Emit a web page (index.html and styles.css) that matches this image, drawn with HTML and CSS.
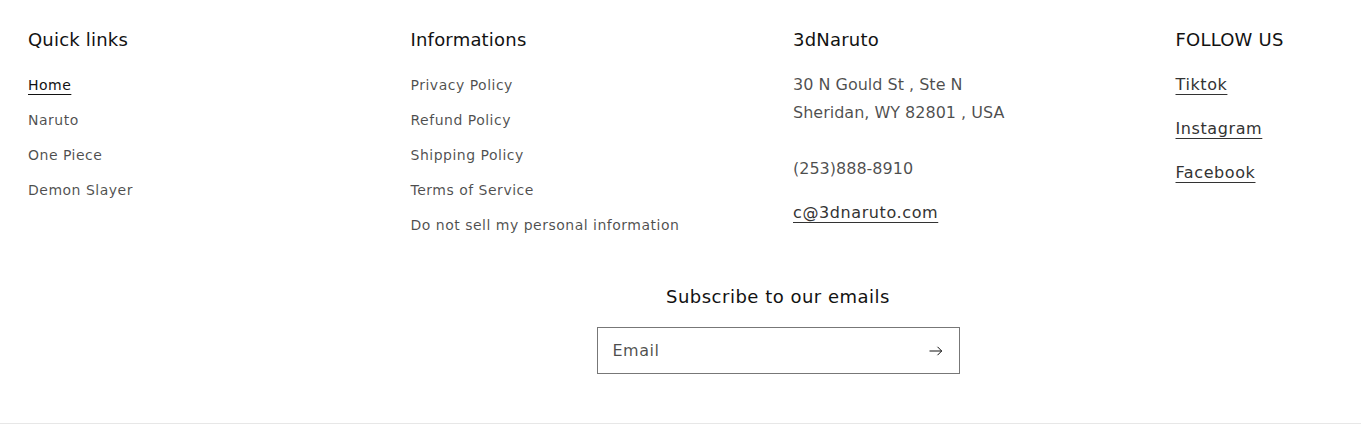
FILE: index.html
```html
<!DOCTYPE html>
<html lang="en">
<head>
<meta charset="utf-8">
<title>Footer</title>
<link rel="stylesheet" href="styles.css">
</head>
<body>
<footer class="footer">
  <div class="page">
    <div class="cols">
      <div class="col">
        <h2 class="heading">Quick links</h2>
        <ul class="links">
          <li><a class="link link-active" href="#">Home</a></li>
          <li><a class="link" href="#">Naruto</a></li>
          <li><a class="link" href="#">One Piece</a></li>
          <li><a class="link" href="#">Demon Slayer</a></li>
        </ul>
      </div>
      <div class="col">
        <h2 class="heading">Informations</h2>
        <ul class="links">
          <li><a class="link" href="#">Privacy Policy</a></li>
          <li><a class="link" href="#">Refund Policy</a></li>
          <li><a class="link" href="#">Shipping Policy</a></li>
          <li><a class="link" href="#">Terms of Service</a></li>
          <li><a class="link" href="#">Do not sell my personal information</a></li>
        </ul>
      </div>
      <div class="col">
        <h2 class="heading">3dNaruto</h2>
        <div class="rich">
          <p class="para address">30 N Gould St , Ste N<br>Sheridan, WY 82801 , USA<br><br>(253)888-8910</p>
          <p class="para"><a class="ulink" href="#">c@3dnaruto.com</a></p>
        </div>
      </div>
      <div class="col">
        <h2 class="heading">FOLLOW US</h2>
        <div class="rich">
          <p class="para"><a class="ulink" href="#">Tiktok</a></p>
          <p class="para"><a class="ulink" href="#">Instagram</a></p>
          <p class="para"><a class="ulink" href="#">Facebook</a></p>
        </div>
      </div>
    </div>
    <div class="subscribe">
      <h2 class="heading sub-heading">Subscribe to our emails</h2>
      <form class="field">
        <input class="input" type="email" placeholder="Email">
        <button class="submit" type="button" aria-label="Subscribe">
          <svg width="14" height="10" viewBox="0 0 14 10" fill="none"><path d="M8.5 0.8 L12.7 5 L8.5 9.2 M0.5 5 H12.7" stroke="#121212" stroke-width="1"/></svg>
        </button>
      </form>
    </div>
  </div>
</footer>
</body>
</html>
```

FILE: styles.css
```css
html, body {
  margin: 0;
  padding: 0;
  background: #ffffff;
}
body {
  font-family: "DejaVu Sans", "Noto Sans", sans-serif;
  color: #121212;
}
.footer {
  border-bottom: 1px solid #e7e7e7;
  padding: 28px 0 49px;
}
.page {
  margin: 0 28px;
}
.cols {
  display: grid;
  grid-template-columns: repeat(3, 352.5px) 1fr;
  column-gap: 30px;
}
.heading {
  margin: 0 0 16px;
  font-size: 18px;
  line-height: 24px;
  font-weight: 400;
  letter-spacing: 0.2px;
  color: #121212;
}
.links {
  list-style: none;
  margin: 0;
  padding: 0;
}
.links li {
  line-height: 35px;
  font-size: 14px;
}
.link {
  color: rgba(18,18,18,0.75);
  text-decoration: none;
  letter-spacing: 0.5px;
}
.link-active {
  color: #121212;
  text-decoration: underline;
  text-underline-offset: 4px;
  text-decoration-thickness: 1px;
}
.rich {
  padding-top: 3px;
}
.para {
  margin: 0 0 16px;
  font-size: 16px;
  line-height: 28px;
  letter-spacing: 0.6px;
  color: rgba(18,18,18,0.75);
}
.address {
  letter-spacing: 0;
}
.ulink {
  color: #333;
  text-decoration: underline;
  text-underline-offset: 4px;
  text-decoration-thickness: 1px;
}
.subscribe {
  display: flex;
  flex-direction: column;
  align-items: center;
  padding: 42px 0 0 195px;
}
.sub-heading {
  margin-bottom: 18px;
  letter-spacing: 0.5px;
}
.field {
  display: flex;
  align-items: center;
  width: 363px;
  height: 47px;
  box-sizing: border-box;
  border: 1px solid #777;
  margin: 0;
}
.input {
  flex: 1;
  min-width: 0;
  border: 0;
  outline: 0;
  padding: 0 0 0 15px;
  font-family: inherit;
  font-size: 16px;
  letter-spacing: 0.5px;
  color: #121212;
  background: transparent;
  height: 100%;
}
.input::placeholder {
  color: rgba(18,18,18,0.75);
}
.submit {
  border: 0;
  background: transparent;
  padding: 0;
  width: 44px;
  height: 100%;
  display: flex;
  align-items: center;
  justify-content: center;
  margin-right: 1px;
}
```
